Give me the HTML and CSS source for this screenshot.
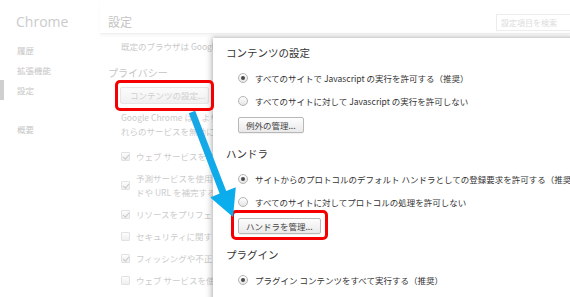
FILE: index.html
```html
<!DOCTYPE html>
<html lang="ja">
<head>
<meta charset="utf-8">
<title>設定 - コンテンツの設定</title>
<link rel="stylesheet" href="styles.css">
</head>
<body>
<div class="page">
  <nav class="sidebar">
    <div class="brand">Chrome</div>
    <ul class="nav">
      <li>履歴</li>
      <li>拡張機能</li>
      <li class="active">設定</li>
      <li class="about">概要</li>
    </ul>
  </nav>
  <main class="main">
    <header class="head">
      <h1 class="title">設定</h1>
      <div class="search">設定項目を検索</div>
    </header>
    <div class="body">
      <p class="line default-browser">既定のブラウザは Google Chrome です。</p>
      <h2 class="section">プライバシー</h2>
      <div class="bg-btn">コンテンツの設定...</div>
      <p class="para">Google Chrome は、より快適にブラウジングできるようにウェブ サービスを使用することがあります。必要に応じて、こ<br>れらのサービスを無効にすることもできます。</p>
      <ul class="checks">
        <li><span class="cb on"></span><span>ウェブ サービスを使用してナビゲーション エラーの解決を助ける</span></li>
        <li><span class="cb on"></span><span>予測サービスを使用してアドレスバーに入力された検索キーワー<br>ドや URL を補完する</span></li>
        <li><span class="cb on"></span><span>リソースをプリフェッチしてページをより速く読み込む</span></li>
        <li><span class="cb"></span><span>セキュリティに関する事象の詳細を Google に自動送信する</span></li>
        <li><span class="cb on"></span><span>フィッシングや不正なソフトウェアからの保護を有効にする</span></li>
        <li><span class="cb"></span><span>ウェブ サービスを使用してスペルミスを解決する</span></li>
        <li><span class="cb"></span><span>使用統計データと障害レポートを Google に自動送信する</span></li>
      </ul>
    </div>
  </main>
</div>

<div class="dialog">
  <h3 class="dlg-title">コンテンツの設定</h3>
  <div class="radio-row first"><span class="radio on"></span><span>すべてのサイトで Javascript の実行を許可する（推奨）</span></div>
  <div class="radio-row"><span class="radio"></span><span>すべてのサイトに対して Javascript の実行を許可しない</span></div>
  <div class="btn">例外の管理...</div>

  <h3 class="dlg-section">ハンドラ</h3>
  <div class="radio-row first"><span class="radio on"></span><span>サイトからのプロトコルのデフォルト ハンドラとしての登録要求を許可する（推奨）</span></div>
  <div class="radio-row"><span class="radio"></span><span>すべてのサイトに対してプロトコルの処理を許可しない</span></div>
  <div class="btn">ハンドラを管理...</div>

  <h3 class="dlg-section">プラグイン</h3>
  <div class="radio-row first"><span class="radio on"></span><span>プラグイン コンテンツをすべて実行する（推奨）</span></div>
</div>

<div class="mark mark-content"></div>
<div class="mark mark-handler"></div>
<svg class="arrow" width="570" height="297" viewBox="0 0 570 297">
  <defs>
    <linearGradient id="ag" x1="0" y1="0" x2="0" y2="1">
      <stop offset="0" stop-color="#1aa6e4"/>
      <stop offset="1" stop-color="#08aeee"/>
    </linearGradient>
  </defs>
  <polygon fill="url(#ag)" points="188.8,113.3 195.2,110.8 226.2,191 235.8,187.2 233,217 210.3,197.4 219.6,193.6"/>
</svg>
</body>
</html>
```

FILE: styles.css
```css
* { box-sizing: border-box; }
html, body { margin: 0; padding: 0; }
body {
  width: 570px;
  height: 297px;
  overflow: hidden;
  position: relative;
  background: #fff;
  font-family: "Noto Sans CJK JP", sans-serif;
  color: #c8c8c8;
}
ul { list-style: none; margin: 0; padding: 0; }
p, h1, h2, h3 { margin: 0; font-weight: normal; }

.page { display: flex; height: 297px; }

/* sidebar */
.sidebar { width: 100px; flex: none; padding-top: 12px; }
.brand {
  font-family: "Open Sans", sans-serif;
  font-size: 14px;
  line-height: 20px;
  padding-left: 16px;
  color: #cbcbcb;
}
.nav { margin-top: 8px; }
.nav li {
  font-size: 8.5px;
  line-height: 20px;
  height: 20px;
  padding-left: 17px;
  color: #c6c6c6;
}
.nav li.active { box-shadow: inset 4px 0 0 #cfcfcf; }
.nav li.about { margin-top: 19px; }

/* main */
.main { flex: 1; min-width: 0; }
.head {
  height: 34px;
  padding: 14px 0 0 8px;
  display: flex;
  justify-content: space-between;
  align-items: flex-start;
  border-bottom: 1px solid #f0f0f0;
  box-shadow: 0 2px 3px rgba(0,0,0,0.04);
}
.title { font-size: 12px; line-height: 16px; color: #c4c4c4; }
.search {
  width: 74px;
  height: 17px;
  border: 1px solid #ececec;
  border-right: none;
  font-size: 8px;
  line-height: 15px;
  padding-left: 4px;
  color: #dcdcdc;
}
.body { padding-left: 8px; }
.line, .para, .checks li { font-size: 8.5px; }
.default-browser { margin: 6px 0 0 13px; line-height: 12px; white-space: nowrap; color: #c9c9c9; }
.section { font-size: 10px; line-height: 14px; margin-top: 14px; color: #c6c6c6; }
.bg-btn {
  display: inline-block;
  margin: 6px 0 0 12px;
  width: 89px;
  height: 17px;
  border: 1px solid #e6e6e6;
  border-radius: 2px;
  background: linear-gradient(#fbfbfb, #f1f1f1);
  font-size: 8.5px;
  line-height: 15px;
  padding-left: 9px;
  color: #cfcfcf;
  white-space: nowrap;
}
.para { margin: 6px 0 0 13px; line-height: 14px; white-space: nowrap; color: #cbcbcb; }
.checks { margin: 11px 0 0 13px; display: flex; flex-direction: column; gap: 8px; }
.checks li {
  display: flex;
  align-items: center;
  gap: 6px;
  line-height: 14px;
  white-space: nowrap;
  color: #cbcbcb;
}
.cb {
  flex: none;
  width: 9px;
  height: 9px;
  border: 1px solid #e2e2e2;
  border-radius: 1px;
  background: linear-gradient(#fdfdfd, #efefef);
  position: relative;
}
.cb.on::after {
  content: "";
  position: absolute;
  left: 2px;
  top: 0px;
  width: 2.5px;
  height: 5px;
  border: solid #c9c9c9;
  border-width: 0 1.5px 1.5px 0;
  transform: rotate(40deg);
}

/* dialog */
.dialog {
  position: absolute;
  left: 213px;
  top: 38px;
  width: 380px;
  height: 280px;
  background: #fff;
  padding: 8px 0 0 13px;
  color: #333;
  box-shadow: -2px 0 6px rgba(0,0,0,0.22), 0 -1px 3px rgba(0,0,0,0.12);
}
.dlg-title, .dlg-section { font-size: 10.5px; line-height: 14px; color: #333; }
.dlg-section { margin-top: 13px; }
.radio-row {
  display: flex;
  align-items: center;
  gap: 7px;
  margin: 9px 0 0 12px;
  font-size: 8.5px;
  line-height: 14px;
  white-space: nowrap;
  color: #333;
}
.radio-row.first { margin-top: 11px; }
.radio {
  flex: none;
  width: 10px;
  height: 10px;
  border-radius: 50%;
  border: 1px solid #b4b4b4;
  background: linear-gradient(#ffffff, #e4e4e4);
  display: flex;
  align-items: center;
  justify-content: center;
}
.radio.on::after {
  content: "";
  width: 4px;
  height: 4px;
  border-radius: 50%;
  background: #4a4a4a;
}
.btn {
  display: inline-block;
  margin: 9px 0 0 12px;
  height: 16px;
  padding: 0 7px;
  border: 1px solid #b8b8b8;
  border-radius: 2px;
  background: linear-gradient(#fdfdfd, #e9e9e9);
  box-shadow: 0 1px 1px rgba(0,0,0,0.06);
  font-size: 8.5px;
  line-height: 14px;
  color: #444;
  white-space: nowrap;
}

/* annotations */
.mark {
  position: absolute;
  border: 3px solid #f50000;
  border-radius: 5px;
}
.mark-content { left: 115px; top: 80px; width: 99px; height: 31px; }
.mark-handler { left: 231px; top: 210px; width: 97px; height: 30px; }
.arrow { position: absolute; left: 0; top: 0; pointer-events: none; }
```
